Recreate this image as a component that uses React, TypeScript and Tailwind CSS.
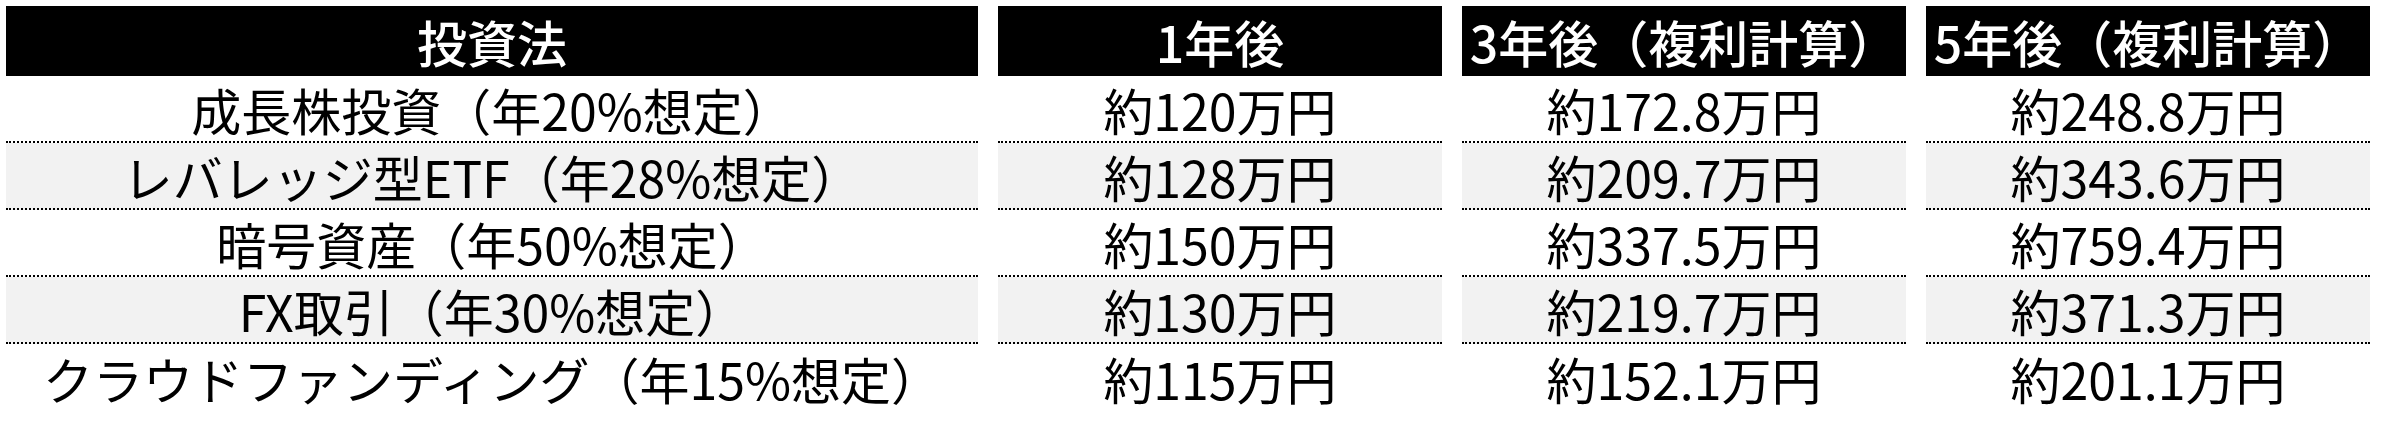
const headers = ["投資法", "1年後", "3年後（複利計算）", "5年後（複利計算）"]

const rows = [
  ["成長株投資（年20%想定）", "約120万円", "約172.8万円", "約248.8万円"],
  ["レバレッジ型ETF（年28%想定）", "約128万円", "約209.7万円", "約343.6万円"],
  ["暗号資産（年50%想定）", "約150万円", "約337.5万円", "約759.4万円"],
  ["FX取引（年30%想定）", "約130万円", "約219.7万円", "約371.3万円"],
  ["クラウドファンディング（年15%想定）", "約115万円", "約152.1万円", "約201.1万円"],
]

export default function App() {
  return (
    <div
      className="w-[2382px] h-[428px] bg-white pt-[6px] pl-[6px]"
      style={{ fontFamily: '"Noto Sans CJK JP", "Noto Sans", sans-serif' }}
    >
      <div className="grid grid-cols-[972px_444px_444px_444px] gap-x-5">
        {headers.map((h) => (
          <div
            key={h}
            className="h-[70px] bg-black text-white text-[50px] leading-none font-medium flex items-center justify-center whitespace-nowrap"
          >
            {h}
          </div>
        ))}
        {rows.map((row, ri) =>
          row.map((cell, ci) => (
            <div
              key={ri + "-" + ci}
              className={
                "h-[67px] text-black text-[50px] leading-none flex items-center justify-center whitespace-nowrap " +
                (ri % 2 === 1 ? "bg-[#f2f2f2] " : "bg-white ") +
                (ri < rows.length - 1 ? "border-b-2 border-dotted border-black" : "")
              }
            >
              {cell}
            </div>
          ))
        )}
      </div>
    </div>
  )
}
